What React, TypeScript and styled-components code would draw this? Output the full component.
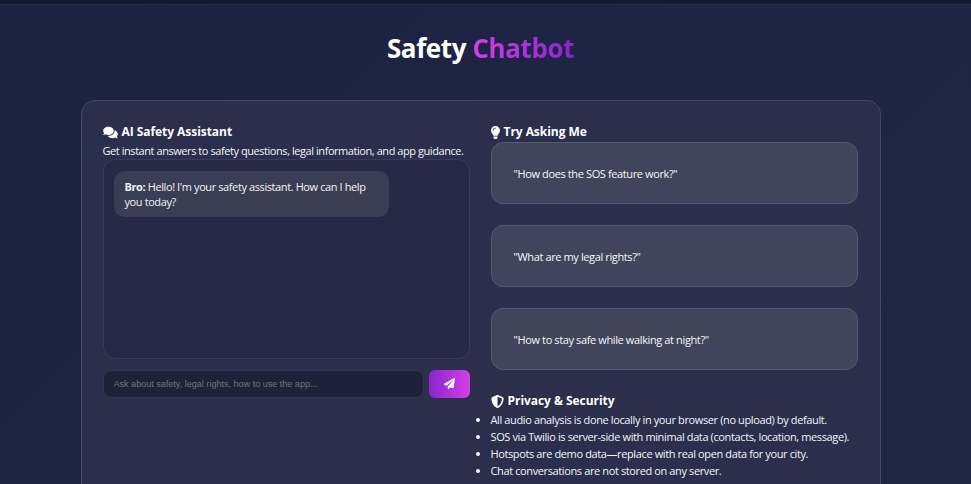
import React from "react";
import styled, { createGlobalStyle } from "styled-components";
import { FaComments, FaLightbulb, FaShieldAlt, FaPaperPlane } from "react-icons/fa";

const Global = createGlobalStyle`
  html, body { margin: 0; padding: 0; height: 484px; overflow: hidden; }
  body { background: #1e2443; font-family: "Open Sans", "Noto Sans", sans-serif; color: #fff; }
  * { box-sizing: border-box; }
`;
const Page = styled.div`
  height: 484px; overflow: hidden; padding-right: 10px;
  background: linear-gradient(135deg, #1c2241 0%, #1e2443 50%, #1f2747 100%);
`;
const TopBar = styled.div`
  height: 5px; margin-right: -10px; background: #14182e; border-bottom: 1px solid #2a2e48;
`;
const Title = styled.h1`
  margin: 26px 0 0; height: 69px; text-align: center; font-size: 26px; line-height: 34px; font-weight: 700; color: #fff; letter-spacing: -0.4px;
`;
const Accent = styled.span`
  background: linear-gradient(90deg, #d63fe6, #8a25cf);
  -webkit-background-clip: text; background-clip: text; color: transparent;
`;
const Card = styled.section`
  width: 800px; margin: 0 auto; height: 420px; padding: 21px;
  background: #2b2f4b; border: 1px solid #454963; border-radius: 14px;
  display: grid; grid-template-columns: 367px 367px; column-gap: 21px; align-content: start;
`;
const Column = styled.div`display: flex; flex-direction: column;`;
const Heading = styled.h3`
  margin: 0; font-size: 12px; line-height: 20px; font-weight: 700; color: #fff; letter-spacing: -0.05px;
  display: flex; align-items: center; gap: 4px;
`;
const Glyph = styled.span<{ $w: number }>`
  display: inline-flex; flex: none; width: ${(p) => p.$w}px;
  svg { width: 100%; height: 13px; }
`;
const Sub = styled.p`margin: 0; font-size: 11px; line-height: 17px; color: #f4f4f8; white-space: nowrap; letter-spacing: -0.44px;`;
const ChatBox = styled.div`
  height: 200px; padding: 11px 10px; background: #252944; border: 1px solid #383c56; border-radius: 12px;
`;
const Bubble = styled.div`
  width: 275px; padding: 8px 11px; background: #3a3e54; border-radius: 10px;
  font-size: 11px; line-height: 15px; color: #f4f4f8; letter-spacing: -0.4px;
`;
const InputRow = styled.div`display: flex; gap: 5px; margin-top: 11px;`;
const Input = styled.input`
  flex: 1; height: 28px; padding: 0 10px; background: #1e2239; border: 1px solid #32364f; border-radius: 8px;
  font-family: "Liberation Sans", sans-serif; font-size: 9.05px; color: #fff; outline: none;
  &::placeholder { color: #73757f; }
`;
const Send = styled.button`
  width: 41px; height: 28px; border: 0; border-radius: 6px; padding: 0 0 1px; color: #fff;
  background: linear-gradient(90deg, #8a25cf, #d63fe6);
  display: flex; align-items: center; justify-content: center;
  svg { width: 11px; height: 11px; }
`;
const Suggestions = styled.div`display: flex; flex-direction: column; gap: 21px;`;
const Suggestion = styled.div`
  height: 62px; padding: 0 22px; display: flex; align-items: center;
  background: #41455b; border: 1px solid #565a70; border-radius: 12px;
  font-size: 11px; color: #f8f8fa; letter-spacing: -0.38px;
`;
const Privacy = styled.div`margin-top: 21px;`;
const List = styled.ul`
  margin: 0; padding: 0; list-style: disc;
  li { font-size: 11px; line-height: 17px; color: #f4f4f8; white-space: nowrap; letter-spacing: -0.38px; }
`;

export default function App() {
  return (
    <Page>
      <Global />
      <TopBar />
      <Title>Safety <Accent>Chatbot</Accent></Title>
      <Card>
        <Column>
          <Heading><Glyph $w={15}><FaComments /></Glyph> AI Safety Assistant</Heading>
          <Sub>Get instant answers to safety questions, legal information, and app guidance.</Sub>
          <ChatBox>
            <Bubble><strong>Bro:</strong> Hello! I'm your safety assistant. How can I help you today?</Bubble>
          </ChatBox>
          <InputRow>
            <Input placeholder="Ask about safety, legal rights, how to use the app..." />
            <Send><FaPaperPlane /></Send>
          </InputRow>
        </Column>
        <Column>
          <Heading><Glyph $w={9}><FaLightbulb /></Glyph> Try Asking Me</Heading>
          <Suggestions>
            <Suggestion>"How does the SOS feature work?"</Suggestion>
            <Suggestion>"What are my legal rights?"</Suggestion>
            <Suggestion>"How to stay safe while walking at night?"</Suggestion>
          </Suggestions>
          <Privacy>
            <Heading><Glyph $w={13}><FaShieldAlt /></Glyph> Privacy &amp; Security</Heading>
            <List>
              <li>All audio analysis is done locally in your browser (no upload) by default.</li>
              <li>SOS via Twilio is server-side with minimal data (contacts, location, message).</li>
              <li>Hotspots are demo data—replace with real open data for your city.</li>
              <li>Chat conversations are not stored on any server.</li>
            </List>
          </Privacy>
        </Column>
      </Card>
    </Page>
  );
}
